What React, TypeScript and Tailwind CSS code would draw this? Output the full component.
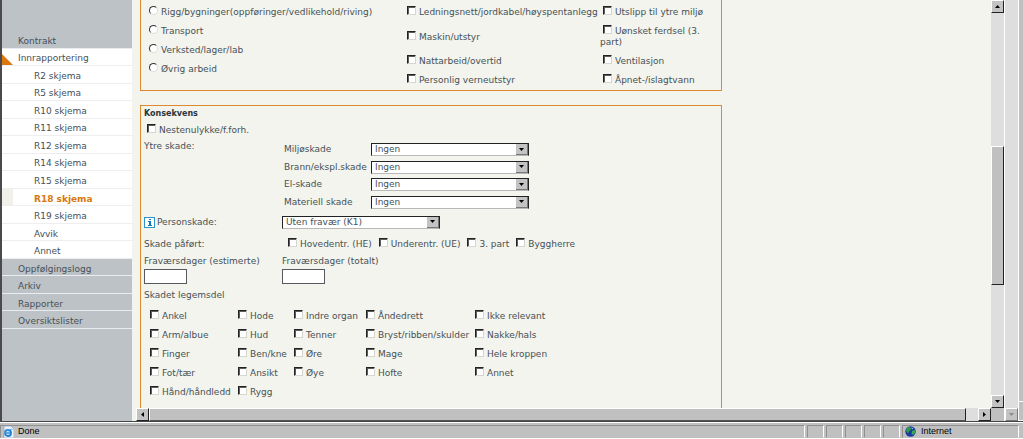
import { ReactNode } from 'react'

const menuItems = [
  { label: 'Kontrakt', kind: 'main' },
  { label: 'Innrapportering', kind: 'open' },
  { label: 'R2 skjema', kind: 'sub' },
  { label: 'R5 skjema', kind: 'sub' },
  { label: 'R10 skjema', kind: 'sub' },
  { label: 'R11 skjema', kind: 'sub' },
  { label: 'R12 skjema', kind: 'sub' },
  { label: 'R14 skjema', kind: 'sub' },
  { label: 'R15 skjema', kind: 'sub' },
  { label: 'R18 skjema', kind: 'active' },
  { label: 'R19 skjema', kind: 'sub' },
  { label: 'Avvik', kind: 'sub' },
  { label: 'Annet', kind: 'sub' },
  { label: 'Oppfølgingslogg', kind: 'main' },
  { label: 'Arkiv', kind: 'main' },
  { label: 'Rapporter', kind: 'main' },
  { label: 'Oversiktslister', kind: 'main' },
]

const menuClasses: Record<string, string> = {
  main: 'border-[#e9ecee] pl-4',
  open: 'border-[#eeeeee] bg-white pl-4',
  sub: 'border-[#eeeeee] bg-white pl-8',
  active: 'border-[#eeeeee] bg-white pl-8 font-bold text-[#d9780f]',
}

const workTypes = ['Rigg/bygninger(oppføringer/vedlikehold/riving)', 'Transport', 'Verksted/lager/lab', 'Øvrig arbeid']

const conditions = [
  'Ledningsnett/jordkabel/høyspentanlegg', 'Utslipp til ytre miljø',
  'Maskin/utstyr', 'Uønsket ferdsel (3. part)',
  'Nattarbeid/overtid', 'Ventilasjon',
  'Personlig verneutstyr', 'Åpnet-/islagtvann',
]

const damages = ['Miljøskade', 'Brann/ekspl.skade', 'El-skade', 'Materiell skade']

const parties = ['Hovedentr. (HE)', 'Underentr. (UE)', '3. part', 'Byggherre']

const bodyParts = [
  'Ankel', 'Hode', 'Indre organ', 'Åndedrett', 'Ikke relevant',
  'Arm/albue', 'Hud', 'Tenner', 'Bryst/ribben/skulder', 'Nakke/hals',
  'Finger', 'Ben/kne', 'Øre', 'Mage', 'Hele kroppen',
  'Fot/tær', 'Ansikt', 'Øye', 'Hofte', 'Annet',
  'Hånd/håndledd', 'Rygg',
]

function Check({ label }: { label: string }) {
  return (
    <label className="block pt-[3px] pb-1">
      <input
        type="checkbox"
        className="mx-[3px] inline-block size-[9px] appearance-none border border-t-[#222222] border-r-[#d6d6d0] border-b-[#d6d6d0] border-l-[#222222] bg-white align-baseline shadow-[inset_1px_1px_#5c5c5a] checked:bg-[#4a5258]"
      />
      {label}
    </label>
  )
}

function Radio({ label }: { label: string }) {
  return (
    <label className="block pt-[3px] pb-1">
      <input
        type="radio"
        name="arbeid"
        className="mx-[3px] inline-block size-[9px] appearance-none rounded-full border border-t-[#333333] border-r-[#deded8] border-b-[#deded8] border-l-[#333333] bg-white align-baseline checked:bg-[#4a5258]"
      />
      {label}
    </label>
  )
}

function Select({ id, value }: { id: string; value: string }) {
  return (
    <div className="relative w-[158px]">
      <select
        id={id}
        className="block h-[13px] w-full appearance-none border border-t-[#222222] border-r-[#222222] border-b-[#b8b8b8] border-l-[#222222] bg-white pl-[3px] text-[9px] leading-[11px]"
      >
        <option>{value}</option>
      </select>
      <span className="pointer-events-none absolute inset-y-px right-px flex w-3 items-center justify-center border-r border-b border-[#777777] bg-[#c3c3c3]">
        <Arrow dir="down" />
      </span>
    </div>
  )
}

const arrowPaths = {
  up: 'M0 4 L2.5 1 L5 4 Z',
  down: 'M0 1 L5 1 L2.5 4 Z',
  left: 'M4 0 L4 5 L1 2.5 Z',
  right: 'M1 0 L1 5 L4 2.5 Z',
}

function Arrow({ dir, className = 'fill-black' }: { dir: keyof typeof arrowPaths; className?: string }) {
  return (
    <svg className={className} width="5" height="5" viewBox="0 0 5 5">
      <path d={arrowPaths[dir]} />
    </svg>
  )
}

function ScrollButton({ dir, label }: { dir: keyof typeof arrowPaths; label: string }) {
  return (
    <button
      aria-label={label}
      className="flex size-[13px] shrink-0 items-center justify-center border border-t-white border-r-[#222222] border-b-[#222222] border-l-white bg-[#c3c3c3]"
    >
      <Arrow dir={dir} />
    </button>
  )
}

function Pane({ children, className }: { children?: ReactNode; className: string }) {
  return (
    <div className={`flex items-center border border-t-[#909090] border-r-white border-b-[#c0c0c0] border-l-[#909090] ${className}`}>
      {children}
    </div>
  )
}

function Sidebar() {
  return (
    <nav className="w-[130px] shrink-0 bg-[#bdc2c6] pt-[31px]">
      <ul className="grid h-[298px] auto-rows-fr">
        {menuItems.map((item) => (
          <li key={item.label} className={`relative flex items-center border-b pt-1 ${menuClasses[item.kind]}`}>
            {item.kind === 'open' && (
              <svg className="absolute bottom-0 left-0 fill-[#d9780f]" width="11" height="11" viewBox="0 0 11 11">
                <path d="M0 0 L11 11 L0 11 Z" />
              </svg>
            )}
            {item.kind === 'active' && <span className="absolute inset-y-0 left-0 w-[11px] bg-[#f1f1ea]" />}
            <a href="#">{item.label}</a>
          </li>
        ))}
      </ul>
    </nav>
  )
}

function ConditionsBox() {
  return (
    <section className="grid max-w-[582px] grid-cols-[258px_1fr] border border-t-0 border-[#dd8a2e] pt-[3px] pl-[5px]">
      <div>
        {workTypes.map((label) => <Radio key={label} label={label} />)}
      </div>
      <div className="grid grid-cols-[196px_1fr] items-center">
        {conditions.map((label) => <Check key={label} label={label} />)}
      </div>
    </section>
  )
}

function ConsequenceBox() {
  return (
    <section className="mt-[14px] max-w-[582px] border border-[#dd8a2e] px-[3px]">
      <h2 className="text-[8px] leading-[15px] font-bold text-[#2c363c]">Konsekvens</h2>
      <Check label="Nestenulykke/f.forh." />

      <div className="mt-px grid grid-cols-[138px_1fr]">
        <p>Ytre skade:</p>
        <div className="grid h-[70px] grid-cols-[89px_1fr] items-center">
          {damages.map((label) => (
            <div key={label} className="contents">
              <label htmlFor={label} className="pl-[2px] whitespace-nowrap">{label}</label>
              <Select id={label} value="Ingen" />
            </div>
          ))}
        </div>
      </div>

      <div className="grid h-[22px] grid-cols-[138px_1fr] items-center">
        <div className="flex items-center gap-[2px]">
          <svg width="11" height="11" viewBox="0 0 11 11">
            <rect x="0.5" y="0.5" width="10" height="10" fill="#ffffff" stroke="#2f93c8" />
            <path d="M5 2h2v1h-2z M4 4h3v4h1v1h-4v-1h1v-3h-1z" fill="#1878b4" />
          </svg>
          <label htmlFor="personskade">Personskade:</label>
        </div>
        <Select id="personskade" value="Uten fravær (K1)" />
      </div>

      <div className="mt-[2px] grid grid-cols-[138px_1fr] items-center">
        <p>Skade påført:</p>
        <div className="flex gap-1 pl-[3px]">
          {parties.map((label) => <Check key={label} label={label} />)}
        </div>
      </div>

      <div className="grid grid-cols-[138px_1fr] pt-[2px]">
        <div>
          <label htmlFor="estimerte" className="block">Fraværsdager (estimerte)</label>
          <input id="estimerte" type="text" className="mt-[2px] block h-[15px] w-[43px] border border-[#555a60] bg-white px-[2px]" />
        </div>
        <div>
          <label htmlFor="totalt" className="block">Fraværsdager (totalt)</label>
          <input id="totalt" type="text" className="mt-[2px] block h-[15px] w-[43px] border border-[#555a60] bg-white px-[2px]" />
        </div>
      </div>

      <p className="mt-[6px]">Skadet legemsdel</p>
      <div className="mt-[6px] grid grid-cols-[88px_56px_72px_109px_1fr] pb-8 pl-[3px] whitespace-nowrap">
        {bodyParts.map((label) => <Check key={label} label={label} />)}
      </div>
    </section>
  )
}

function StatusBar() {
  return (
    <footer className="flex h-[17px] shrink-0 gap-[2px] border-t border-b border-white bg-[#c0c0c0] pt-[2px] pr-1 font-['Liberation_Sans',sans-serif] text-[9px] text-black">
      <Pane className="flex-1 gap-1 pl-[2px]">
        <svg width="11" height="12" viewBox="0 0 11 12">
          <path d="M1 0h7l3 3v9H1z" fill="#e8f1fa" stroke="#7d9bb8" strokeWidth="0.6" />
          <circle cx="5" cy="7" r="3" fill="none" stroke="#1d7fd0" strokeWidth="1.8" />
          <path d="M2.5 7H8" stroke="#1d7fd0" strokeWidth="1.3" />
          <path d="M0.5 9.5C2 5 6 2.5 9.5 3.5" fill="none" stroke="#59aef0" />
        </svg>
        Done
      </Pane>
      <Pane className="w-[17px]" />
      <Pane className="w-[17px]" />
      <Pane className="w-[17px]" />
      <Pane className="w-[17px]" />
      <Pane className="w-[17px]" />
      <Pane className="w-[117px] gap-[5px] pl-[2px]">
        <svg width="11" height="11" viewBox="0 0 11 11">
          <circle cx="5.5" cy="5.5" r="5.2" fill="#173a9c" />
          <path d="M2 1.5L5 1l1.5 2L4.5 5 3 7.5 1 5z" fill="#2f9a4a" />
          <path d="M7 5l3-1 .5 2L8.5 9 6.5 8z" fill="#38a852" />
          <path d="M6 1.5l2 .5-.5 1.5z" fill="#a9d4f5" />
        </svg>
        Internet
      </Pane>
    </footer>
  )
}

export default function App() {
  return (
    <div className="flex h-screen flex-col overflow-hidden bg-[#c0c0c0] font-[Verdana,'DejaVu_Sans',sans-serif] text-[9px] leading-[11px] text-[#465057]">
      <div className="flex min-h-0 flex-1 border-b border-[#444444]">
        <div className="w-[2px] shrink-0 bg-[#4a4a4e]" />
        <Sidebar />

        <div className="flex min-w-0 flex-1 flex-col bg-[#f3f4ed]">
          <div className="flex min-h-0 flex-1">
            <main className="min-w-0 flex-1 overflow-hidden pl-2">
              <ConditionsBox />
              <ConsequenceBox />
            </main>
            <div className="flex w-[13px] shrink-0 flex-col bg-[#dedede]">
              <ScrollButton dir="up" label="Rull opp" />
              <div className="flex-[134]" />
              <div className="flex-[137] border border-t-white border-r-[#222222] border-b-[#222222] border-l-white bg-[#c0c0c0]" />
              <div className="flex-[111]" />
              <ScrollButton dir="down" label="Rull ned" />
            </div>
          </div>
          <div className="ml-1 flex h-[13px] shrink-0 bg-[#dedede]">
            <ScrollButton dir="left" label="Rull til venstre" />
            <div className="flex-1 border border-t-white border-r-[#222222] border-b-[#555555] border-l-white bg-[#c0c0c0]" />
            <div className="w-3" />
            <ScrollButton dir="right" label="Rull til høyre" />
            <div className="w-[13px] bg-[#c0c0c0]" />
          </div>
        </div>

        <div className="flex w-[14px] shrink-0 flex-col justify-end border-l border-white bg-[#dedede]">
          <button
            disabled
            aria-label="Rull siden ned"
            className="flex size-[13px] items-center justify-center border border-t-white border-r-[#777777] border-b-[#777777] border-l-white bg-[#c3c3c3]"
          >
            <Arrow dir="down" className="fill-[#8a8a8a]" />
          </button>
        </div>
        <div className="flex w-[5px] shrink-0 flex-col justify-end border-l border-white">
          <div className="h-5 border-t border-b border-white" />
        </div>
      </div>
      <StatusBar />
    </div>
  )
}
